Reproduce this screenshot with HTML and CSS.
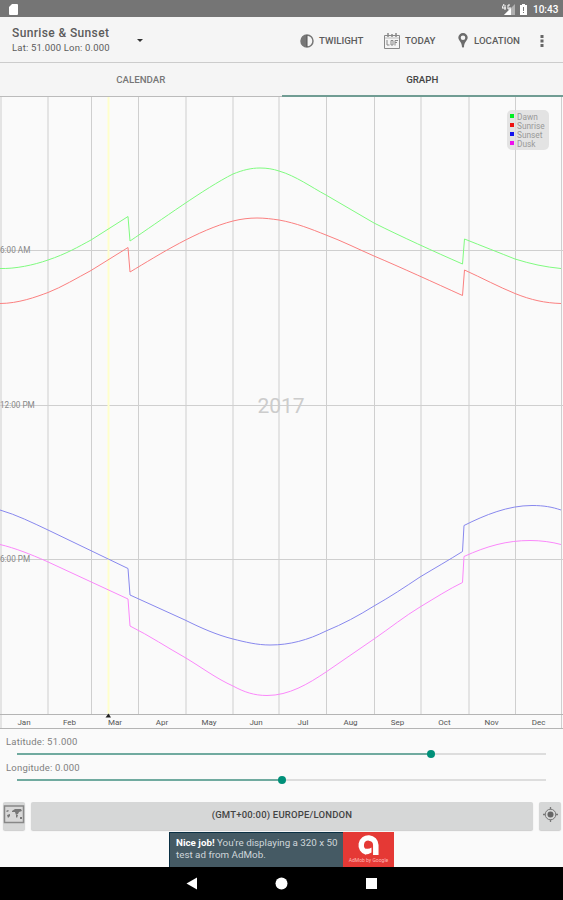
FILE: index.html
```html
<!DOCTYPE html>
<html lang="en">
<head>
    <meta charset="UTF-8">
    <meta name="viewport" content="width=device-width, initial-scale=1.0">
    <title>Sunrise &amp; Sunset</title>
    <link rel="stylesheet" href="styles.css">
</head>
<body>
    <div class="status-bar">
        <svg class="sd-card" width="9" height="11" viewBox="0 0 9 11"><path fill="#fff" d="M3 0h5q1 0 1 1v9q0 1-1 1H1q-1 0-1-1V3z"/></svg>
        <svg class="signal" width="13" height="11" viewBox="0 0 13 11"><path fill="#b0b0b0" d="M13 0v11H2z"/><path fill="#fff" d="M9 4v7H2z"/><path d="M2 0L0 4h4M3 1v5M8 1H6v4h2V3" fill="none" stroke="#fff"/></svg>
        <svg class="battery" width="7" height="11" viewBox="0 0 7 11"><path fill="#fff" d="M2 0h3v1h2v10H0V1h2z"/><path fill="#777" d="M3 3h1v4H3zM3 8h1v1H3z"/></svg>
        <span class="time">10:43</span>
    </div>

    <div class="toolbar">
        <div class="title">
            <h1>Sunrise &amp; Sunset</h1>
            <p>Lat: 51.000 Lon: 0.000</p>
        </div>
        <div class="caret"></div>
        <div class="actions">
            <div class="action twilight">
                <svg width="14" height="14" viewBox="0 0 14 14"><circle cx="7" cy="7" r="6" fill="none" stroke="#777" stroke-width="1.500"/><path d="M7 1a6 6 0 0 0 0 12z" fill="#777"/><path d="M7 1v12" stroke="#555"/></svg>
                <span>TWILIGHT</span>
            </div>
            <div class="action today">
                <svg width="16" height="16" viewBox="0 0 16 16"><path d="M.5 2.500h15v13H.5z" fill="none" stroke="#888"/><path d="M1 5h14" stroke="#bbb"/><path d="M4 0v4M8 1v3M12 0v4" stroke="#888" stroke-width="1.500"/><path d="M3 7v5h2.500M7 7.500v4.500h2V7.500zM11 12.500V7.500h3M11 9.500h2" fill="none" stroke="#888"/></svg>
                <span>TODAY</span>
            </div>
            <div class="action location">
                <svg width="10" height="15" viewBox="0 0 10 15"><path fill="#6c6c6c" fill-rule="evenodd" d="M5 0a4.700 4.700 0 0 1 4.700 4.700C9.700 7 6 9 6 14q-1 1-2 0C4 9 .3 7 .3 4.700A4.700 4.700 0 0 1 5 0zm0 2.500a2.300 2.300 0 1 0 0 4.600 2.300 2.300 0 0 0 0-4.600z"/></svg>
                <span>LOCATION</span>
            </div>
            <svg class="more" width="4" height="12" viewBox="0 0 4 12"><path fill="#666" d="M.5 0h3v3h-3zM.5 4.500h3v3h-3zM.5 9h3v3h-3z"/></svg>
        </div>
    </div>

    <div class="tabs">
        <div class="tab">CALENDAR</div>
        <div class="tab active">GRAPH</div>
    </div>

    <svg class="chart" width="563" height="633" viewBox="0 97 563 633">
        <g class="grid">
            <path class="wide" d="M1 97V729M48 97V715M186 97V715M233 97V715M279 97V715M421 97V715M469 97V715"/>
            <path d="M91.500 97V715M138.500 97V715M326.500 97V715M374.500 97V715M515.500 97V715M561.500 97V729"/>
            <path d="M0 250.500H563M0 405.500H563M0 559.500H563"/>
            <path class="axis" d="M0 714.500H563M0 728.500H563"/>
        </g>
        <text class="year" x="281" y="412.500" textLength="47">2017</text>
        <path class="today-line" d="M108.500 97V714"/>
        <path d="M105.500 717.500L108.500 713.500L111 717.500z" fill="#222"/>
        <g class="hours">
            <text x="0" y="253">6:00 AM</text>
            <text x="0" y="408">12:00 PM</text>
            <text x="0" y="562">6:00 PM</text>
        </g>
        <g class="curves">
            <path stroke="#80fa80" d="M0 268.500C15 269 34 265 48 260C66 254 78 247 91 240L128 216.500L130 241C160 221 205 188 233 174C243 170 251 168 260 168C267 168 273 169 279 171C296 176 311 187 326 195C342 204 358 214 374 223C400 236 435 252 462.500 264L464.500 239C482 246 500 253 515 259C531 264 545 267 561 268.500"/>
            <path stroke="#fa8080" d="M0 303.500C18 303.500 36 297 48 292.500C62 287 77 278 91 270.500L128 247.500L130 272C160 254 198 230 233 221C241 219 249 218 257 218C265 218 272 219 279 220C296 223 311 229 326 235C342 241 358 249 374 256C400 267 435 283 462.500 295.500L464.500 270C482 278 499 287 515 293.500C531 300 545 303 561 303.500"/>
            <path stroke="#8888ee" d="M0 510C17 515 32 522.500 48 530L128 568.500L130 595L185 620C201 628 217 635 233 639C245 642 257 645 270 645C290 645 308 640 326 631C343 624 358 616 374 606C390 597 405 587 420 577C435 568 449 560 462.500 551.500L464 525.500C485 515 508 505.500 532 505.500C544 505.500 552 507 561 510"/>
            <path stroke="#fa88fa" d="M0 544.500C15 548 31 554.500 46 561L128 599L130 626C150 636 168 648 185 657.500C201 667 217 679 233 686C244 692 254 695.500 267 695.500C289 695.500 308 684 326 672C342 661 358 650 374 639C390 628 405 616 420 607C435 598 449 589 462.500 582.500L464 556.500C487 546 507 540.500 530 540.500C541 540.500 552 542 561 544.500"/>
        </g>
        <g class="months">
            <text x="24" y="725">Jan</text>
            <text x="69.500" y="725">Feb</text>
            <text x="115" y="725">Mar</text>
            <text x="162" y="725">Apr</text>
            <text x="209" y="725">May</text>
            <text x="256" y="725">Jun</text>
            <text x="303" y="725">Jul</text>
            <text x="350.500" y="725">Aug</text>
            <text x="397.500" y="725">Sep</text>
            <text x="444.500" y="725">Oct</text>
            <text x="491.500" y="725">Nov</text>
            <text x="538.500" y="725">Dec</text>
        </g>
        <g class="legend">
            <rect x="507" y="110" width="42" height="40" rx="5"/>
            <path fill="#0e2" d="M510 114h4v4h-4z"/>
            <path fill="#e11" d="M510 123h4v4h-4z"/>
            <path fill="#11e" d="M510 132h4v4h-4z"/>
            <path fill="#e1e" d="M510 141h4v4h-4z"/>
            <text x="517" y="119.500">Dawn</text>
            <text x="517" y="128.500">Sunrise</text>
            <text x="517" y="137.500">Sunset</text>
            <text x="517" y="146.500">Dusk</text>
        </g>
    </svg>

    <div class="sliders">
        <label>Latitude: 51.000</label>
        <div class="slider"><div class="fill" style="width: 78.330%"></div></div>
        <label>Longitude: 0.000</label>
        <div class="slider"><div class="fill" style="width: 50%"></div></div>
    </div>

    <div class="buttons">
        <div class="button map">
            <svg width="22" height="19" viewBox="0 0 22 19"><path d="M1.500 1h19v16.500h-19z" fill="#d8d8d8" stroke="#888" stroke-width="1.500"/><path fill="#777" d="M3 6l2-1 1 1-2 1zM4 10l3-1 0 2-2 2zM9 6l3-2 6 0 1 2-3 1-1 2-2 1-1-3-3 0zM13 9l2 1-1 3-1-1zM17 12l2 0 0 2-2 0z"/></svg>
        </div>
        <div class="button timezone">(GMT+00:00) EUROPE/LONDON</div>
        <div class="button locate">
            <svg width="15" height="15" viewBox="0 0 15 15"><circle cx="7.500" cy="7.500" r="5.300" fill="none" stroke="#777"/><circle cx="7.500" cy="7.500" r="3" fill="#666"/><path d="M7.500 0v2.500M7.500 12.500V15M0 7.500h2.500M12.500 7.500H15" stroke="#777" stroke-width="1.300"/></svg>
        </div>
    </div>

    <div class="ad">
        <div class="ad-text"><b>Nice job!</b> You're displaying a 320 x 50<br>test ad from AdMob.</div>
        <div class="ad-logo">
            <svg width="24" height="23" viewBox="0 0 24 23"><path d="M9.500 18.200A7.300 7.300 0 1 1 18.800 11V21" fill="none" stroke="#fff" stroke-width="5.500"/><path d="M8.500 14.500q3.500 1 6-1v5q-3 2-6 2z" fill="#fff"/></svg>
            <span>AdMob by Google</span>
        </div>
    </div>

    <div class="nav-bar">
        <svg width="563" height="33" viewBox="0 0 563 33"><path d="M186.500 16.500L197 10.500V22.500z" fill="#fff"/><circle cx="281.500" cy="16.500" r="6" fill="#fff"/><path d="M366 11h11v11h-11z" fill="#fff"/></svg>
    </div>
</body>
</html>
```
FILE: styles.css
```css
* {
    box-sizing: border-box;
}

body {
    margin: 0;
    width: 563px;
    height: 900px;
    overflow: hidden;
    display: flex;
    flex-direction: column;
    background-color: #fafafa;
    font-family: Roboto, 'Liberation Sans', sans-serif;
    color: #5c5c5c;
}

svg {
    display: block;
    flex-shrink: 0;
}

.status-bar {
    height: 17px;
    flex-shrink: 0;
    display: flex;
    align-items: center;
    padding: 1px 5px 0 9px;
    background-color: #757575;
}

.signal {
    margin-left: auto;
}

.battery {
    margin-left: 5px;
}

.time {
    width: 25px;
    margin-left: 6px;
    font-size: 10px;
    font-weight: 500;
    color: #fff;
    white-space: nowrap;
}

.toolbar {
    height: 46px;
    flex-shrink: 0;
    display: flex;
    align-items: center;
    padding: 2px 19px 0 12px;
    background-color: #f5f5f5;
    border-bottom: 1px solid #ccc;
}

.title {
    width: 125px;
}

.title h1 {
    margin: 0;
    font-size: 12px;
    line-height: 15px;
    font-weight: 500;
    letter-spacing: 0.37px;
    white-space: nowrap;
}

.title p {
    margin: 0;
    font-size: 9.5px;
    line-height: 14px;
    letter-spacing: 0.18px;
    white-space: nowrap;
}

.caret {
    border: 3px solid transparent;
    border-top-color: #333;
    border-bottom: 0;
}

.actions {
    flex: 1;
    display: flex;
    align-items: center;
    justify-content: flex-end;
}

.action {
    display: flex;
    align-items: center;
    gap: 5px;
    font-size: 9.7px;
    font-weight: 500;
}

.twilight span {
    width: 44px;
}

.today {
    margin-left: 21px;
}

.today span {
    width: 30px;
}

.location {
    margin-left: 23px;
    gap: 6px;
}

.location span {
    width: 47px;
}

.more {
    margin-left: 19px;
}

.tabs {
    height: 34px;
    flex-shrink: 0;
    display: flex;
    background-color: #f5f5f5;
    border-bottom: 1px solid #bbb;
}

.tab {
    flex: 1;
    font-size: 9.7px;
    font-weight: 500;
    line-height: 33px;
    text-align: center;
    color: #777;
}

.tab.active {
    height: 34px;
    border-bottom: 2px solid #709c93;
    color: #444;
}

.grid path {
    fill: none;
    stroke: #cfcfcf;
}

.grid .wide {
    stroke: #e4e4e4;
    stroke-width: 2;
}

.grid .axis {
    stroke: #b4b4b4;
}

.today-line {
    stroke: #ffffcc;
    stroke-width: 2;
}

.year {
    font-size: 21px;
    text-anchor: middle;
    fill: #ccc;
}

.hours {
    font-size: 8.2px;
    fill: #888;
}

.curves path {
    fill: none;
    stroke-width: 1;
}

.months {
    font-size: 8px;
    text-anchor: middle;
    fill: #555;
}

.legend rect {
    fill: #ddd;
    fill-opacity: 0.8;
}

.legend text {
    font-size: 8.3px;
    fill: #999;
}

.sliders {
    height: 72px;
    flex-shrink: 0;
    padding: 5px 17px 0 6px;
    font-size: 9.5px;
    letter-spacing: 0.2px;
    color: #808080;
}

.sliders label {
    display: block;
    height: 14px;
    line-height: 14px;
}

.slider {
    height: 12px;
    margin-left: 11px;
    padding-top: 4px;
    background: linear-gradient(#ddd, #ddd) 0 4px / 100% 2px no-repeat;
}

.fill {
    height: 2px;
    display: flex;
    align-items: center;
    justify-content: flex-end;
    background-color: #70aa9f;
}

.fill::after {
    content: '';
    width: 8px;
    height: 8px;
    margin-right: -4px;
    flex-shrink: 0;
    border-radius: 50%;
    background-color: #009079;
}

.buttons {
    height: 28px;
    flex-shrink: 0;
    display: flex;
    gap: 6px;
    padding: 0 2px 0 3px;
}

.button {
    display: flex;
    align-items: center;
    justify-content: center;
    padding-bottom: 3px;
    border-radius: 2px;
    background-color: #d6d7d7;
    box-shadow: 0 1px 1px #ccc;
}

.map,
.locate {
    width: 22px;
}

.timezone {
    flex: 1;
    font-size: 9.5px;
    font-weight: 500;
    letter-spacing: 0.2px;
    color: #444;
}

.ad {
    width: 225px;
    height: 35px;
    flex-shrink: 0;
    display: flex;
    margin: 2px 0 0 169px;
    background-color: #455a64;
    border-left: 1px solid #0b3044;
    border-top: 1px solid #0b3044;
}

.ad-text {
    flex: 1;
    padding: 4px 0 0 6px;
    font-size: 9.8px;
    line-height: 12px;
    white-space: nowrap;
    color: #cfd6da;
}

.ad-text b {
    color: #fff;
}

.ad-logo {
    width: 51px;
    display: flex;
    flex-direction: column;
    align-items: center;
    margin-top: -1px;
    padding-top: 2px;
    background-color: #e53935;
}

.ad-logo span {
    font-size: 5px;
    line-height: 7px;
    color: #ffb8b5;
}

.nav-bar {
    height: 33px;
    flex-shrink: 0;
    background-color: #000;
}
```
